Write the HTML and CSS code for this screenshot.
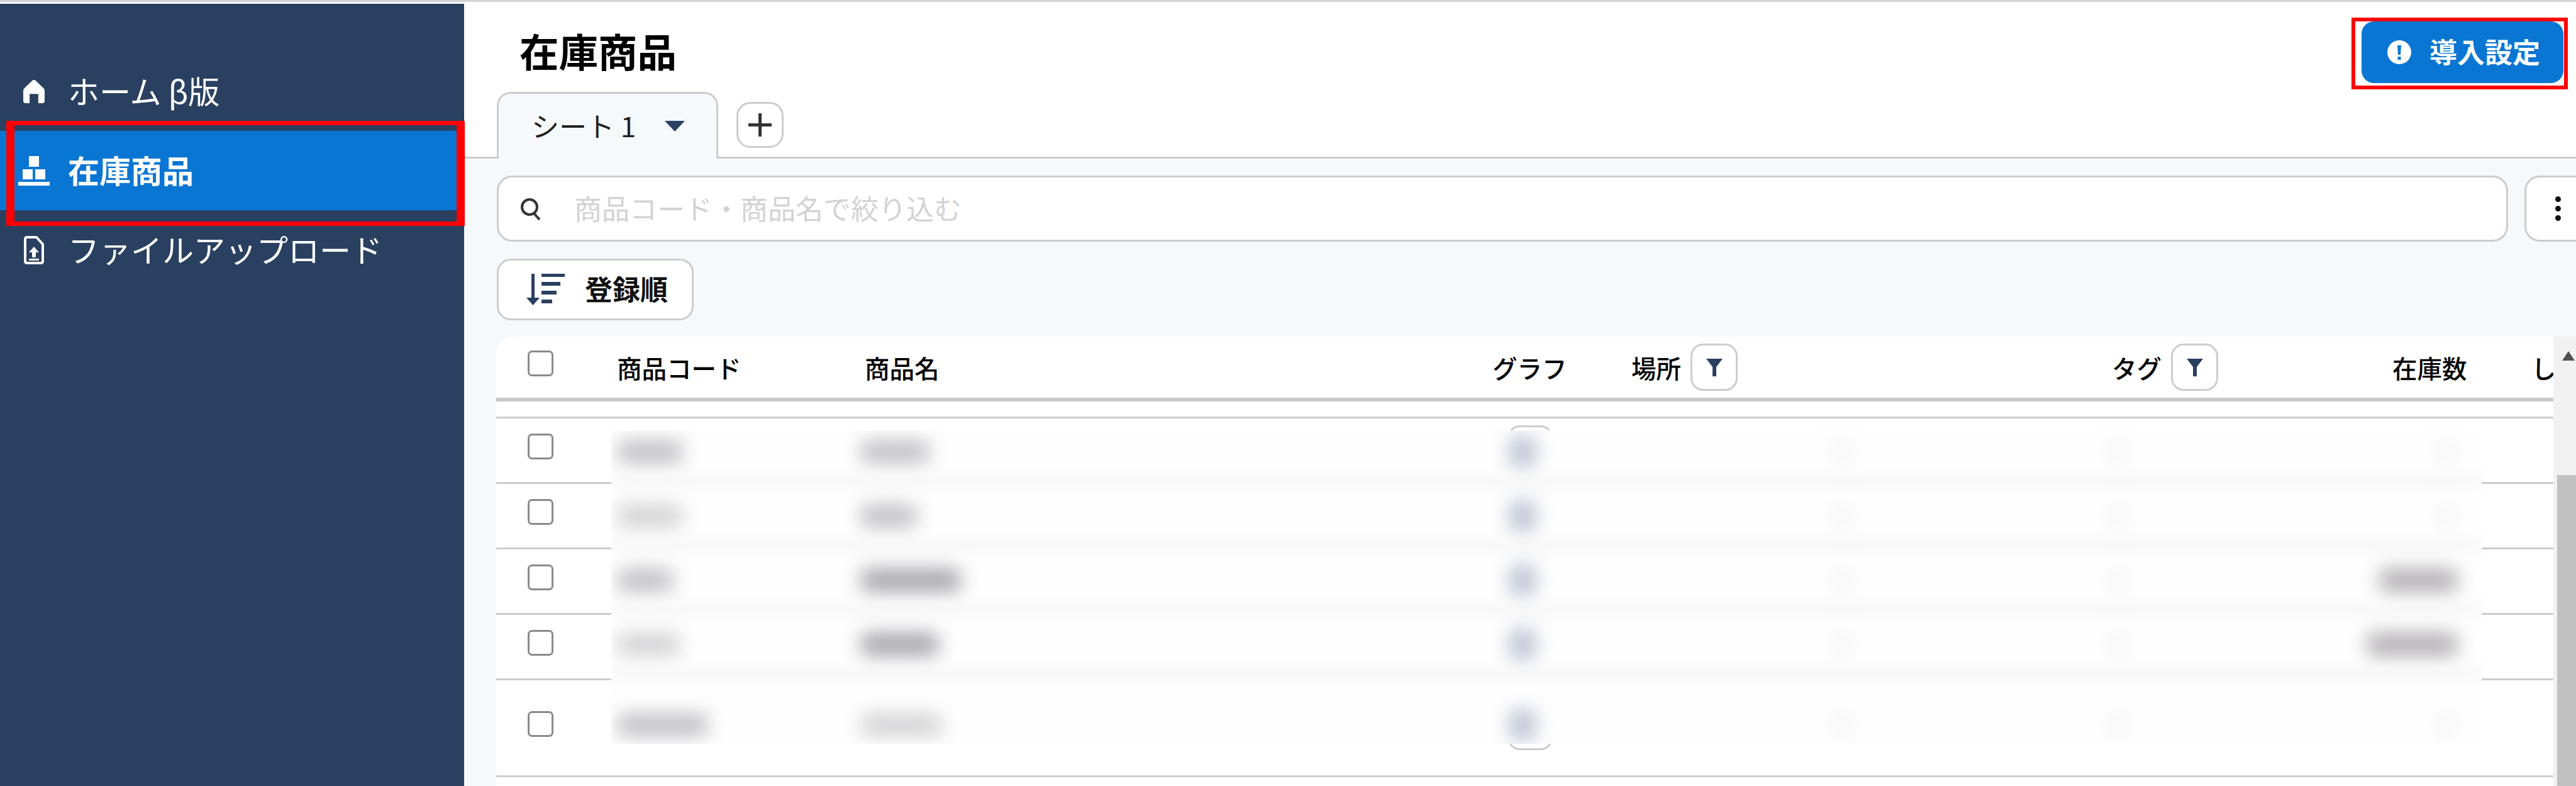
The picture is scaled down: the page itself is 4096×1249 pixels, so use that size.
FILE: index.html
```html
<!DOCTYPE html>
<html lang="ja">
<head>
  <meta charset="utf-8">
  <title>在庫商品</title>
  <link rel="stylesheet" href="styles.css">
</head>
<body>
  <div class="topline"></div>
  <div class="app">

    <aside class="sidebar">
      <div class="mark mark-nav"></div>
      <nav class="nav">
        <a class="nav-item">
          <span class="nav-icon">
            <svg class="icon-home" viewBox="0 0 37 40"><path fill="#fff" d="M18.5 0 Q21 0 23 2.5 L35 14 Q37 16 37 19 V36 Q37 40 33 40 H26 V24 H11 V40 H4 Q0 40 0 36 V19 Q0 16 2 14 L14 2.5 Q16 0 18.5 0Z"/></svg>
          </span>
          <span class="txt">ホーム β版</span>
        </a>
        <a class="nav-item active">
          <span class="nav-icon">
            <svg class="icon-stock" viewBox="0 0 50 47"><path fill="#fff" d="M17 0H33V17H17ZM7 21H23V37H7ZM27 21H43V37H27ZM0 41H50V47H0Z"/></svg>
          </span>
          <span class="txt">在庫商品</span>
        </a>
        <a class="nav-item">
          <span class="nav-icon">
            <svg class="icon-file" viewBox="0 0 32 45"><path fill="none" stroke="#fff" stroke-width="4" stroke-linejoin="round" d="M2 5Q2 2 5 2H20L30 13V40Q30 43 27 43H5Q2 43 2 40Z"/><path fill="#fff" d="M16 17 24 26H19V34H13V26H8Z"/><path fill="#fff" d="M8 36H24V39H8Z"/></svg>
          </span>
          <span class="txt">ファイルアップロード</span>
        </a>
      </nav>
    </aside>

    <main class="main">
      <header class="header">
        <div class="title-row">
          <h1 class="title">在庫商品</h1>
          <div class="mark-button">
            <button class="setup-btn">
              <svg class="icon-alert" viewBox="0 0 38 38"><circle cx="19" cy="19" r="19" fill="#fff"/><path fill="#0a76d3" d="M16 8H22L21 23H17ZM16.5 26H21.5V31H16.5Z"/></svg>
              <span class="txt">導入設定</span>
            </button>
          </div>
        </div>
        <div class="tabs">
          <div class="tab">
            <span class="txt">シート 1</span>
            <span class="caret"></span>
          </div>
          <button class="tab-add">
            <svg class="icon-plus" viewBox="0 0 37 37"><path stroke="#333" stroke-width="5" d="M18.5 0V37M0 18.5H37"/></svg>
          </button>
        </div>
      </header>

      <section class="content">
        <div class="search-row">
          <div class="search">
            <svg class="icon-search" viewBox="0 0 38 36"><circle cx="17" cy="15" r="12" fill="none" stroke="#333" stroke-width="4"/><path stroke="#333" stroke-width="4" d="M24 25 33 35"/></svg>
            <span class="placeholder txt">商品コード・商品名で絞り込む</span>
          </div>
          <button class="more-btn">
            <span class="dot"></span><span class="dot"></span><span class="dot"></span>
          </button>
        </div>

        <button class="sort-btn">
          <svg class="icon-sort" viewBox="0 0 63 50"><path fill="#2a4060" d="M10 0H15V38H23L12.5 50 2 38H10ZM26 0H63V5H26ZM26 13H56V19H26ZM26 27H50V33H26ZM26 41H43V47H26Z"/></svg>
          <span class="txt">登録順</span>
        </button>

        <div class="table-wrap">
          <div class="table">
            <div class="table-head">
              <div class="cell-check"><input class="check" type="checkbox"></div>
              <div>商品コード</div>
              <div>商品名</div>
              <div>グラフ</div>
              <div class="head-filter">場所
                <button class="filter-btn"><svg class="icon-filter" viewBox="0 0 26 28"><path fill="#2a4060" d="M0 0H26L16 13V28H10V13Z"/></svg></button>
              </div>
              <div class="head-filter">タグ
                <button class="filter-btn"><svg class="icon-filter" viewBox="0 0 26 28"><path fill="#2a4060" d="M0 0H26L16 13V28H10V13Z"/></svg></button>
              </div>
              <div>在庫数</div>
              <div class="clip">し</div>
            </div>

            <div class="spacer-row"></div>

            <div class="table-row">
              <div class="cell-check"><input class="check" type="checkbox"></div><div></div><div></div><div><div class="graph-btn"></div></div>
            </div>
            <div class="table-row">
              <div class="cell-check"><input class="check" type="checkbox"></div><div></div><div></div><div><div class="graph-btn"></div></div>
            </div>
            <div class="table-row">
              <div class="cell-check"><input class="check" type="checkbox"></div><div></div><div></div><div><div class="graph-btn"></div></div>
            </div>
            <div class="table-row">
              <div class="cell-check"><input class="check" type="checkbox"></div><div></div><div></div><div><div class="graph-btn"></div></div>
            </div>
            <div class="table-row tall">
              <div class="cell-check"><input class="check" type="checkbox"></div><div></div><div></div><div><div class="graph-btn"></div></div>
            </div>

            <!-- blurred out part of the screenshot -->
            <div class="patch">
              <div class="patch-row">
                <div class="blob w90 mid"></div><div class="blob w100 mid"></div><div class="blob w40 graph"></div>
                <div class="blob w30 ghost"></div><div class="blob w30 ghost"></div><div class="blob w30 ghost end"></div>
              </div>
              <div class="patch-row">
                <div class="blob w90 faint"></div><div class="blob w80 mid"></div><div class="blob w40 graph"></div>
                <div class="blob w30 ghost"></div><div class="blob w30 ghost"></div><div class="blob w30 ghost end"></div>
              </div>
              <div class="patch-row">
                <div class="blob w75 mid"></div><div class="blob w150 dark"></div><div class="blob w40 graph"></div>
                <div class="blob w30 ghost"></div><div class="blob w30 ghost"></div><div class="blob w110 stock end"></div>
              </div>
              <div class="patch-row">
                <div class="blob w85 faint"></div><div class="blob w110 dark"></div><div class="blob w40 graph"></div>
                <div class="blob w30 ghost"></div><div class="blob w30 ghost"></div><div class="blob w135 stock end"></div>
              </div>
              <div class="patch-row last">
                <div class="blob w135 mid"></div><div class="blob w120 faint"></div><div class="blob w40 graph"></div>
                <div class="blob w30 ghost"></div><div class="blob w30 ghost"></div><div class="blob w30 ghost end"></div>
              </div>
            </div>
          </div>

          <div class="scrollbar">
            <span class="scroll-up"></span>
            <div class="scroll-thumb"></div>
          </div>
        </div>
      </section>
    </main>

  </div>
</body>
</html>
```

FILE: styles.css
```css
*{
  box-sizing: border-box;
  padding: 0;
  margin: 0;
}

html, body {
  height: 100%;
  overflow: hidden;
}

body {
  font-family: "Noto Sans CJK JP", "Noto Sans", sans-serif;
  background-color: #fff;
  color: #111;
  display: flex;
  flex-direction: column;
}

button {
  font-family: inherit;
  cursor: pointer;
}

/* the font sits a little low in its line box */
.txt {
  margin-bottom: 4px;
}

.topline {
  height: 6px;
  border-top: 3px solid #d2d2d2;
  flex: none;
}

.app {
  flex: 1;
  display: flex;
  min-height: 0;
}

/* sidebar */
.sidebar {
  position: relative;
  width: 738px;
  flex: none;
  padding-top: 76px;
  background-color: #2a4060;
  color: #fff;
}

.nav-item {
  display: flex;
  align-items: center;
  height: 126px;
  font-size: 50px;
  white-space: nowrap;
}

.nav-item.active {
  background-color: #0a76d3;
  font-weight: bold;
}

.nav-icon {
  width: 108px;
  flex: none;
  display: flex;
  justify-content: center;
}

.icon-home { width: 34px; height: 37px; }
.icon-stock { width: 50px; height: 47px; }
.icon-file { width: 32px; height: 45px; }

/* red annotation frames */
.mark-nav {
  position: absolute;
  left: 10px;
  top: 186px;
  width: 729px;
  height: 167px;
  border: solid #ff0000;
  border-width: 7px 13px;
}

.mark-button {
  width: 344px;
  height: 114px;
  padding: 0 1px 4px 10px;
  border: 6px solid #ff0000;
}

/* header */
.main {
  flex: 1;
  min-width: 0;
  display: flex;
  flex-direction: column;
}

.header {
  flex: none;
  height: 246px;
  border-bottom: 3px solid #ccc;
}

.title-row {
  height: 140px;
  display: flex;
  justify-content: space-between;
  align-items: flex-start;
  padding: 22px 13px 0 88px;
}

.title {
  font-size: 62.5px;
  line-height: 70px;
  font-weight: bold;
  color: #000;
  margin-top: 17px;
}

.setup-btn {
  width: 321px;
  height: 98px;
  display: flex;
  align-items: center;
  gap: 29px;
  padding-left: 41px;
  border: none;
  border-radius: 20px;
  background-color: #0a76d3;
  color: #fff;
  font-size: 44px;
  font-weight: bold;
}

.icon-alert { width: 38px; height: 38px; }

.tabs {
  display: flex;
  align-items: flex-start;
  gap: 29px;
  padding-left: 52px;
}

.tab {
  width: 352px;
  height: 106px;
  display: flex;
  justify-content: space-between;
  align-items: center;
  padding: 0 50px 0 52px;
  background-color: #f6f9fc;
  border: 3px solid #ccc;
  border-bottom: none;
  border-radius: 22px 22px 0 0;
  font-size: 44px;
  color: #222;
}

.caret {
  width: 0;
  height: 0;
  border-style: solid;
  border-width: 17px 16px 0 16px;
  border-color: #2a4060 transparent transparent transparent;
}

.tab-add {
  width: 75px;
  height: 73px;
  margin-top: 16px;
  display: flex;
  justify-content: center;
  align-items: center;
  background-color: #fff;
  border: 3px solid #ccc;
  border-radius: 22px;
}

.icon-plus { width: 37px; height: 37px; }

/* content */
.content {
  flex: 1;
  min-height: 0;
  display: flex;
  flex-direction: column;
  align-items: flex-start;
  padding: 27px 0 0 52px;
  background-color: #f6f9fc;
  overflow: hidden;
}

.search-row {
  display: flex;
  gap: 26px;
  height: 105px;
  margin-bottom: 27px;
}

.search {
  width: 3198px;
  display: flex;
  align-items: center;
  padding-left: 32px;
  background-color: #fff;
  border: 3px solid #ccc;
  border-radius: 24px;
}

.icon-search { width: 38px; height: 36px; }

.placeholder {
  margin-left: 50px;
  font-size: 44px;
  color: #d3d3d3;
}

.more-btn {
  width: 120px;
  display: flex;
  flex-direction: column;
  justify-content: center;
  gap: 6px;
  padding-left: 46px;
  background-color: #fff;
  border: 3px solid #ccc;
  border-radius: 24px;
}

.dot {
  width: 9px;
  height: 9px;
  border-radius: 50%;
  background-color: #111;
}

.sort-btn {
  width: 313px;
  height: 98px;
  display: flex;
  align-items: center;
  gap: 32px;
  padding-left: 42px;
  margin-bottom: 26px;
  background-color: #fff;
  color: #111;
  border: 3px solid #ccc;
  border-radius: 22px;
  font-size: 44px;
  font-weight: bold;
}

.icon-sort { width: 63px; height: 50px; flex: none; }

/* table */
.table-wrap {
  flex: 1;
  min-height: 0;
  display: flex;
  margin-left: -1px;
}

.table {
  position: relative;
  width: 3271px;
  background-color: #fff;
  border-radius: 28px 0 0 0;
  overflow: hidden;
}

.table-head, .table-row {
  display: grid;
  grid-template-columns: 192px 394px 998px 221px 764px 446px 221px 35px;
  align-items: center;
}

.table-head {
  height: 103px;
  border-bottom: 6px solid #c8c8c8;
  font-size: 39.5px;
  font-weight: 500;
  line-height: 1.2;
  color: #000;
}

.spacer-row {
  height: 27px;
  border-bottom: 3px solid #ccc;
}

.table-row {
  height: 104px;
  border-bottom: 3px solid #ccc;
}

.table-row.tall {
  height: 154px;
}

.cell-check {
  padding-left: 50px;
  margin-bottom: 12px;
  display: flex;
}

.check {
  appearance: none;
  width: 41px;
  height: 41px;
  border: 3px solid #8a8a8a;
  border-radius: 7px;
  background-color: #fff;
}

.head-filter {
  display: flex;
  align-items: center;
  gap: 15px;
}

.filter-btn {
  width: 75px;
  height: 75px;
  display: flex;
  justify-content: center;
  align-items: center;
  background-color: #fff;
  border: 3px solid #ccc;
  border-radius: 20px;
}

.icon-filter { width: 26px; height: 28px; }

.clip {
  white-space: nowrap;
  overflow: hidden;
}

.graph-btn {
  width: 70px;
  height: 79px;
  margin-left: 25px;
  border: 3px solid #ccc;
  border-radius: 18px;
}

.tall .graph-btn {
  margin-bottom: 8px;
}

/* blurred area over the rows */
.patch {
  position: absolute;
  left: 183px;
  top: 149px;
  width: 2974px;
  height: 498px;
  display: flex;
  flex-direction: column;
  gap: 62px;
  padding: 9px 0 0 9px;
  background-color: #fefefe;
  overflow: hidden;
}

.patch-row {
  position: relative;
  height: 40px;
  display: grid;
  grid-template-columns: 387px 1032px 512px 437px 400px 159px;
  align-items: center;
}

.patch-row::after {
  content: "";
  position: absolute;
  left: -9px;
  right: 0;
  top: 66px;
  height: 12px;
  background-color: #f4f4f4;
  filter: blur(10px);
}

.patch-row.last {
  margin-top: 26px;
}

.patch-row.last::after {
  display: none;
}

.blob {
  height: 36px;
  border-radius: 14px;
  filter: blur(15px);
}

.w30 { width: 36px; }
.w40 { width: 42px; height: 50px; }
.w75 { width: 90px; }
.w80 { width: 90px; }
.w85 { width: 100px; }
.w90 { width: 105px; }
.w100 { width: 110px; }
.w110 { width: 125px; }
.w120 { width: 130px; }
.w135 { width: 145px; }
.w150 { width: 160px; }

.mid { background-color: #c0c0c4; }
.faint { background-color: #d2d2d4; }
.dark { background-color: #a4a4aa; }
.graph { background-color: #bcc2d2; }
.ghost { background-color: #f5f5f5; }
.stock { background-color: #b0adb0; }
.end { justify-self: end; }

/* scrollbar */
.scrollbar {
  width: 36px;
  display: flex;
  flex-direction: column;
  align-items: flex-end;
  background-color: #f1f1f1;
}

.scroll-up {
  width: 0;
  height: 0;
  margin-top: 23px;
  margin-right: 2px;
  border-style: solid;
  border-width: 0 10px 15px 10px;
  border-color: transparent transparent #505050 transparent;
}

.scroll-thumb {
  width: 30px;
  flex: 1;
  margin-top: 182px;
  background-color: #c1c1c1;
}
```
